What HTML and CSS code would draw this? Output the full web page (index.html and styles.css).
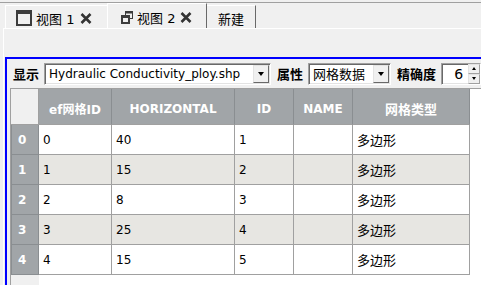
FILE: index.html
```html
<!DOCTYPE html>
<html lang="zh-CN">
<head>
    <meta charset="UTF-8">
    <title>视图</title>
    <link rel="stylesheet" href="styles.css">
</head>
<body>
    <div class="tabbar">
        <div class="tab tab-first">
            <svg class="icon" width="16" height="16" viewBox="0 0 16 16">
                <rect x="1" y="1" width="14" height="14" fill="#f0f0f0" stroke="#3c3c3c" stroke-width="2"/>
                <rect x="0" y="0" width="16" height="4" fill="#3c3c3c"/>
            </svg>
            <span class="tab-text">视图 1</span>
            <svg class="close" width="12" height="11" viewBox="0 0 12 11">
                <path d="M1.5 1 L10.5 10 M10.5 1 L1.5 10" stroke="#333" stroke-width="2.6"/>
            </svg>
        </div>
        <div class="tab active">
            <svg class="icon" width="12" height="13" viewBox="0 0 12 13">
                <rect x="4.5" y="0.5" width="7" height="7" fill="#f0f0f0" stroke="#3c3c3c"/>
                <rect x="4" y="0" width="8" height="2.5" fill="#3c3c3c"/>
                <rect x="1" y="5" width="7" height="7" fill="#f0f0f0" stroke="#3c3c3c" stroke-width="2"/>
                <rect x="0" y="4" width="9" height="3" fill="#3c3c3c"/>
            </svg>
            <span class="tab-text">视图 2</span>
            <svg class="close" width="12" height="11" viewBox="0 0 12 11">
                <path d="M1.5 1 L10.5 10 M10.5 1 L1.5 10" stroke="#333" stroke-width="2.6"/>
            </svg>
        </div>
        <div class="tab tab-new">
            <span class="tab-text">新建</span>
        </div>
    </div>

    <div class="panel">
        <div class="frame">
            <div class="toolbar">
                <span class="label">显示</span>
                <div class="combo combo-file">
                    <span class="value">Hydraulic Conductivity_ploy.shp</span>
                    <span class="drop"><i class="arrow"></i></span>
                </div>
                <span class="label">属性</span>
                <div class="combo combo-attr">
                    <span class="value cn">网格数据</span>
                    <span class="drop"><i class="arrow"></i></span>
                </div>
                <span class="label">精确度</span>
                <div class="combo spin">
                    <span class="value num">6</span>
                    <span class="spin-btns">
                        <span class="spin-btn"><i class="arrow up"></i></span>
                        <span class="spin-btn"><i class="arrow"></i></span>
                    </span>
                </div>
            </div>

            <div class="grid">
                <table>
                    <colgroup>
                        <col class="c-head">
                        <col class="c-fid">
                        <col class="c-hor">
                        <col class="c-id">
                        <col class="c-name">
                        <col class="c-type">
                    </colgroup>
                    <thead>
                        <tr>
                            <th class="corner"></th>
                            <th>ef网格ID</th>
                            <th>HORIZONTAL</th>
                            <th>ID</th>
                            <th>NAME</th>
                            <th class="cn">网格类型</th>
                        </tr>
                    </thead>
                    <tbody>
                        <tr>
                            <th class="row-head">0</th>
                            <td>0</td><td>40</td><td>1</td><td></td><td class="cn">多边形</td>
                        </tr>
                        <tr class="alt">
                            <th class="row-head">1</th>
                            <td>1</td><td>15</td><td>2</td><td></td><td class="cn">多边形</td>
                        </tr>
                        <tr>
                            <th class="row-head">2</th>
                            <td>2</td><td>8</td><td>3</td><td></td><td class="cn">多边形</td>
                        </tr>
                        <tr class="alt">
                            <th class="row-head">3</th>
                            <td>3</td><td>25</td><td>4</td><td></td><td class="cn">多边形</td>
                        </tr>
                        <tr>
                            <th class="row-head">4</th>
                            <td>4</td><td>15</td><td>5</td><td></td><td class="cn">多边形</td>
                        </tr>
                    </tbody>
                </table>
            </div>
        </div>
    </div>
</body>
</html>
```

FILE: styles.css
```css
/* 全局 */
* {
    box-sizing: border-box;
}

body {
    margin: 0;
    width: 481px;
    height: 285px;
    overflow: hidden;
    background: #f0f0f0;
    font-family: "DejaVu Sans", "Noto Sans CJK SC", sans-serif;
    font-size: 12px;
    color: #000;
}

.cn {
    font-size: 13px;
}

/* 标签页 */
.tabbar {
    display: flex;
    align-items: flex-end;
    height: 26px;
    margin-top: 2px;
    padding-left: 5px;
    border-top: 1px solid #a0a0a0;
}

.tab {
    display: flex;
    align-items: center;
    height: 23px;
    padding-top: 2px;
    border-top: 1px solid #fff;
    border-left: 1px solid #fff;
}

.tab-text {
    font-size: 13px;
    white-space: nowrap;
}

.tab .icon {
    margin-right: 4px;
}

.tab .close {
    margin-left: 6px;
}

.tab-first {
    width: 102px;
    padding-left: 10px;
}

.tab.active {
    height: 25px;
    width: 100px;
    padding-left: 13px;
    border-right: 1px solid #696969;
}

.tab.active .close {
    margin-left: 5px;
}

.tab-new {
    width: 49px;
    padding-left: 11px;
    border-left: none;
    border-right: 1px solid #696969;
}

/* 面板 */
.panel {
    height: 257px;
    margin-left: 3px;
    border-top: 1px solid #fff;
    border-left: 1px solid #fff;
}

.frame {
    height: 229px;
    margin: 28px 0 0 1px;
    border-top: 2px solid #0000ff;
    border-left: 2px solid #0000ff;
}

/* 工具栏 */
.toolbar {
    display: flex;
    align-items: center;
    height: 29px;
    padding-left: 6px;
}

.label {
    flex-shrink: 0;
    margin: 0 5px 0 6px;
    font-size: 13px;
    font-weight: bold;
}

.toolbar .label:first-child {
    margin-left: 0;
}

.combo {
    flex-shrink: 0;
    display: flex;
    align-items: center;
    height: 22px;
    padding: 0 1px 0 4px;
    background: #fff;
    border: 1px solid;
    border-color: #a0a0a0 #fff #fff #a0a0a0;
    box-shadow: inset 1px 1px 0 #696969, inset -1px -1px 0 #e3e3e3;
}

.combo .value {
    flex: 1;
    white-space: nowrap;
    overflow: hidden;
}

.combo-file {
    width: 227px;
}

.combo-attr {
    width: 83px;
}

.drop {
    display: flex;
    align-items: center;
    justify-content: center;
    width: 16px;
    height: 18px;
    background: #f0f0f0;
    border: 1px solid;
    border-color: #e3e3e3 #696969 #696969 #e3e3e3;
}

.arrow {
    width: 0;
    height: 0;
    border-left: 3.5px solid transparent;
    border-right: 3.5px solid transparent;
    border-top: 4px solid #000;
}

.arrow.up {
    border-top: none;
    border-bottom: 4px solid #000;
}

.spin {
    width: 40px;
    padding-right: 0;
}

.spin .value.num {
    text-align: right;
    padding-right: 5px;
    font-size: 14px;
}

.spin-btns {
    display: flex;
    flex-direction: column;
    height: 20px;
}

.spin-btn {
    display: flex;
    align-items: center;
    justify-content: center;
    width: 12px;
    height: 10px;
    background: #f0f0f0;
    border: 1px solid;
    border-color: #e3e3e3 #a0a0a0 #a0a0a0 #e3e3e3;
}

.spin-btn .arrow {
    border-left-width: 2.5px;
    border-right-width: 2.5px;
    border-top-width: 3px;
}

.spin-btn .arrow.up {
    border-bottom-width: 3px;
}

/* 表格 */
.grid {
    height: 200px;
    margin-left: 3px;
    border-top: 1px solid #a0a0a0;
    border-left: 1px solid #a0a0a0;
    background: linear-gradient(to right, #f0f0f0 28px, #fff 28px);
}

table {
    table-layout: fixed;
    width: 459px;
    border-collapse: separate;
    border-spacing: 0;
}

.c-head { width: 28px; }
.c-fid { width: 73px; }
.c-hor { width: 123px; }
.c-id { width: 59px; }
.c-name { width: 59px; }
.c-type { width: 117px; }

th, td {
    padding: 0 0 0 4px;
    border-right: 1px solid #a0a0a0;
    border-bottom: 1px solid #a0a0a0;
    text-align: left;
    white-space: nowrap;
    overflow: hidden;
}

thead th {
    height: 36px;
    padding: 4px 0 0;
    background: #a1a5a8;
    color: #fff;
    font-weight: bold;
    text-align: center;
    border-right-color: #8a8e91;
}

thead th.corner {
    background: none;
    border-right-color: #a0a0a0;
}

tbody tr {
    height: 30px;
    background: #fff;
}

tbody tr.alt {
    background: #e7e6e2;
}

.row-head {
    padding-left: 6px;
    background: #a1a5a8;
    color: #fff;
    font-weight: bold;
    border-left: 1px solid #8a8e91;
    border-right-color: #8a8e91;
    border-bottom-color: #8a8e91;
}
```
